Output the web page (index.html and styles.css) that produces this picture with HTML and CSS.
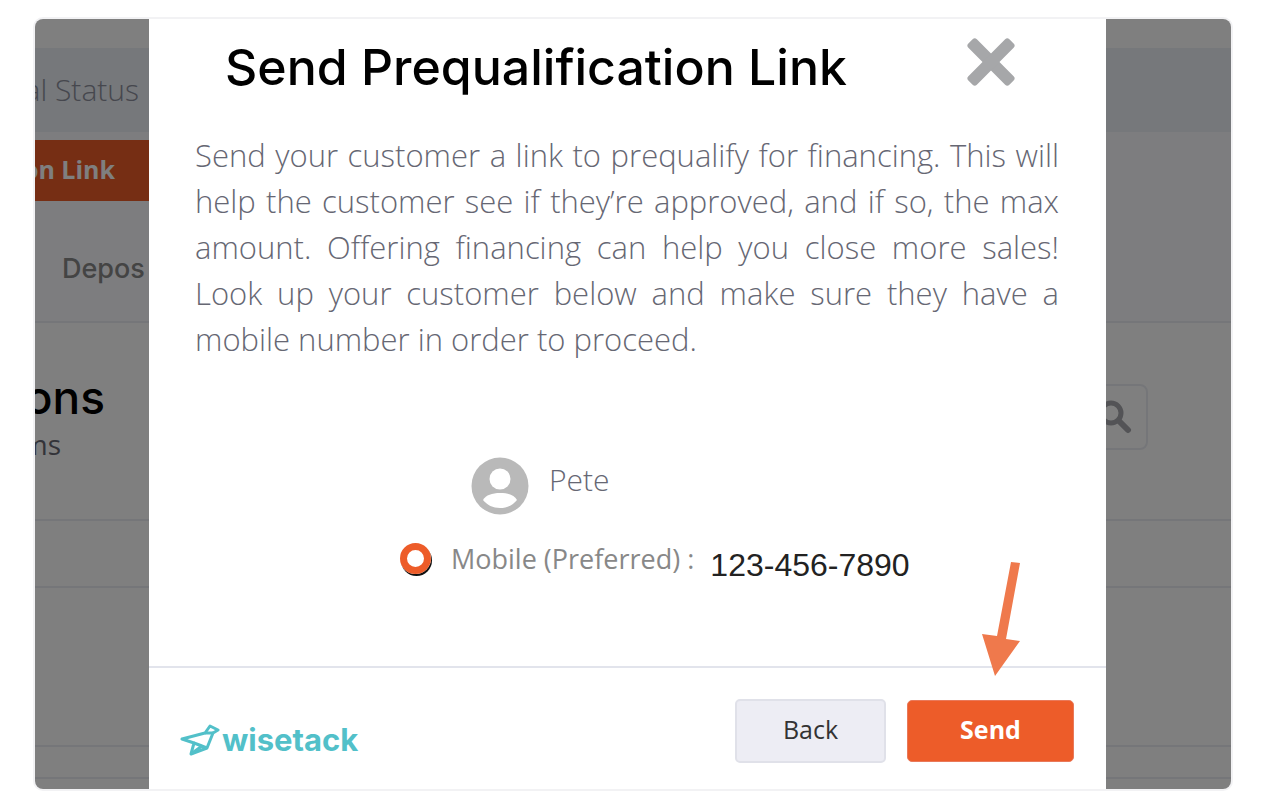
FILE: index.html
```html
<!DOCTYPE html>
<html lang="en">

<head>
    <meta charset="UTF-8">
    <meta name="viewport" content="width=device-width, initial-scale=1.0">
    <title>Send Prequalification Link</title>
    <link rel="stylesheet" href="styles.css">
</head>

<body>
    <div class="frame">
        <!-- page behind the dialog -->
        <div class="page">
            <div class="status-bar">
                <div class="side"><span>al Status</span></div>
            </div>
            <div class="tools">
                <div class="side link-side"><button type="button" class="link-btn">on Link</button></div>
                <div class="tabs"><a href="#">Depos</a></div>
            </div>
            <div class="summary">
                <div class="side summary-side">
                    <h2>ons</h2>
                    <p>ms</p>
                </div>
                <button type="button" class="search-btn" aria-label="Search">
                    <svg width="34" height="34" viewBox="0 0 34 34">
                        <circle cx="13" cy="13" r="10" fill="none" stroke="#a6a7ac" stroke-width="5" />
                        <path d="M21 21l9 9" stroke="#a6a7ac" stroke-width="6" stroke-linecap="round" />
                    </svg>
                </button>
            </div>
            <div class="row"></div>
            <div class="row row-tall"></div>
            <div class="row row-short"></div>
        </div>

        <div class="overlay">
            <div class="modal" role="dialog" aria-labelledby="title">
                <div class="modal-head">
                    <h1 id="title">Send Prequalification Link</h1>
                    <button type="button" class="close" aria-label="Close">
                        <svg width="50" height="50" viewBox="0 0 50 50" fill="#a6a7a9">
                            <rect x="-4" y="19" width="58" height="12" rx="3" transform="rotate(45 25 25)" />
                            <rect x="-4" y="19" width="58" height="12" rx="3" transform="rotate(-45 25 25)" />
                        </svg>
                    </button>
                </div>

                <p class="intro">Send your customer a link to prequalify for financing. This will help the customer see if they’re approved, and if so, the max amount. Offering financing can help you close more sales! Look up your customer below and make sure they have a mobile number in order to proceed.</p>

                <div class="customer">
                    <svg width="58" height="58" viewBox="0 0 58 58">
                        <circle cx="29" cy="29" r="28.500" fill="#b9b9b9" />
                        <circle cx="29" cy="22" r="10.500" fill="#fff" />
                        <path d="M12 43C15 38 21 36 29 36s14 2 17 7c-4 5-10 8-17 8s-13-3-17-8z" fill="#fff" />
                    </svg>
                    <span>Pete</span>
                </div>

                <div class="phone">
                    <input type="radio" id="mobile" name="phone" checked>
                    <label for="mobile">Mobile (Preferred) :</label>
                    <span class="number">123-456-7890</span>
                </div>

                <div class="modal-foot">
                    <a href="#" class="logo">
                        <svg width="40" height="32" viewBox="0 0 40 32" fill="none" stroke="#52c0c9" stroke-width="3" stroke-linejoin="round">
                            <path d="M2 15L25 9L30 2L38 6L33 9L27 24L11 30L14 19Z" />
                            <path d="M25 9L33 9M14 19L27 24M14 19L22 22L11 30" />
                        </svg>
                        <span>wisetack</span>
                    </a>
                    <button type="button" class="btn back">Back</button>
                    <button type="button" class="btn send">Send</button>
                </div>

                <svg class="arrow" width="40" height="116" viewBox="0 0 40 116">
                    <path d="M30 1L39 2L25 78L39 80L14 115L1 73L16 75Z" fill="#ef794c" />
                </svg>
            </div>
        </div>
    </div>
</body>

</html>
```

FILE: styles.css
```css
* {
    margin: 0;
    padding: 0;
    box-sizing: border-box;
}

body {
    background: #fff;
    font-family: "Open Sans", sans-serif;
    color: #666773;
}

a {
    text-decoration: none;
}

button {
    font-family: inherit;
    border: 0;
    cursor: pointer;
}

.frame {
    display: grid;
    margin: 17px 35px 17px 33px;
    border: 2px solid #f2f2f4;
    border-radius: 10px;
    overflow: hidden;
}

.page,
.overlay {
    grid-area: 1 / 1;
    min-width: 0;
}

/* page behind */
.page {
    padding-top: 29px;
}

.side {
    width: 114px;
    display: flex;
    justify-content: flex-end;
    white-space: nowrap;
}

.status-bar {
    height: 84px;
    padding-top: 20px;
    background: #ecf0f6;
    font-size: 30px;
    font-weight: 300;
    line-height: 44px;
    color: #8c8f9c;
}

.status-bar .side {
    padding-right: 10px;
}

.tools {
    height: 191px;
    padding-top: 8px;
    background: #fafafe;
    border-bottom: 2px solid #ebedf2;
}

.link-side {
    background: #ed5c29;
}

.link-btn {
    height: 61px;
    padding: 0 34px 4px 0;
    background: none;
    font-size: 25px;
    font-weight: 700;
    color: #fff;
}

.tabs {
    padding: 50px 27px;
}

.tabs a {
    font-family: Inter, sans-serif;
    font-size: 27px;
    font-weight: 500;
    line-height: 36px;
    color: #888;
}

.summary {
    display: flex;
    justify-content: space-between;
    align-items: flex-start;
    height: 198px;
    padding-right: 83px;
    border-bottom: 2px solid #ebedf2;
}

.summary-side {
    flex-direction: column;
    align-items: flex-end;
    padding-top: 50px;
}

.summary-side h2 {
    padding-right: 44px;
    font-family: Inter, sans-serif;
    font-size: 46px;
    font-weight: 500;
    line-height: 48px;
    color: #000;
}

.summary-side p {
    padding-right: 88px;
    font-size: 28px;
    line-height: 46px;
}

.search-btn {
    display: flex;
    align-items: center;
    justify-content: flex-end;
    width: 80px;
    height: 66px;
    margin-top: 61px;
    padding-right: 14px;
    background: none;
    border: 2px solid #ebedf2;
    border-radius: 8px;
}

.row {
    height: 67px;
    border-bottom: 2px solid #ebedf2;
}

.row-tall {
    height: 159px;
}

.row-short {
    height: 32px;
}

/* dialog */
.overlay {
    padding: 0 125px 0 114px;
    background: rgba(0, 0, 0, 0.5);
}

.modal {
    position: relative;
    background: #fff;
}

.modal-head {
    display: flex;
    justify-content: space-between;
    align-items: flex-start;
    padding: 18px 90px 0 76px;
}

.modal-head h1 {
    font-family: Inter, sans-serif;
    font-size: 50px;
    font-weight: 500;
    line-height: 60px;
    color: #000;
}

.close {
    background: none;
}

.close svg {
    display: block;
}

.intro {
    padding: 35px 47px 0 46px;
    font-size: 31px;
    font-weight: 300;
    line-height: 46px;
    text-align: justify;
}

.customer {
    display: flex;
    gap: 20px;
    padding: 95px 0 0 322px;
    font-size: 30px;
    font-weight: 300;
    line-height: 46px;
}

.phone {
    display: flex;
    align-items: center;
    padding: 20px 0 0 251px;
}

.phone input {
    appearance: none;
    width: 31px;
    height: 31px;
    border: 7px solid #ed5c29;
    border-radius: 50%;
    box-shadow: 1px 2px 0 #111;
}

.phone label {
    padding: 2px 16px 0 20px;
    font-size: 27px;
    line-height: 44px;
    color: #888;
}

.number {
    padding-top: 14px;
    font-family: "Liberation Sans", Arial, sans-serif;
    font-size: 32px;
    line-height: 32px;
    color: #222;
}

.modal-foot {
    display: flex;
    align-items: center;
    gap: 21px;
    height: 123px;
    margin-top: 85px;
    padding: 5px 32px 0 31px;
    border-top: 2px solid #e2e4ec;
}

.logo {
    display: flex;
    align-items: center;
    gap: 2px;
    margin-right: auto;
    padding-top: 18px;
    color: #52c0c9;
}

.logo span {
    font-family: Inter, sans-serif;
    font-size: 31px;
    font-weight: 700;
    line-height: 36px;
}

.btn {
    height: 64px;
    padding-bottom: 4px;
    border-radius: 5px;
    font-size: 25px;
}

.back {
    width: 151px;
    background: #ededf4;
    border: 2px solid #e0e1e9;
    color: #333;
}

.send {
    width: 167px;
    height: 62px;
    background: #ed5c29;
    border: 1px solid #e9795a;
    font-weight: 700;
    color: #fff;
}

.arrow {
    position: absolute;
    right: 85px;
    bottom: 112px;
}
```
